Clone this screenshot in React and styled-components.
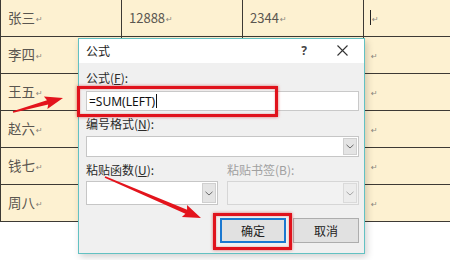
import React from "react";
import styled, { createGlobalStyle } from "styled-components";

const GlobalStyle = createGlobalStyle`
  html, body { margin: 0; padding: 0; background: #ffffff; }
  body { font-family: "Noto Sans", "Noto Sans CJK SC", sans-serif; }
  * { box-sizing: border-box; }
`;

const Page = styled.div`
  position: relative;
  width: 450px;
  height: 260px;
  overflow: hidden;
  background: #ffffff;
`;

const Table = styled.div`
  display: flex;
  flex-direction: column;
  width: 484px;
  background: #fdf1d1;
`;

const Row = styled.div`
  display: grid;
  grid-template-columns: 121px 121px 121px 121px;
  height: 37px;
  border-bottom: 1px solid #3d3a34;
`;

const Cell = styled.div`
  display: flex;
  align-items: center;
  padding-left: ${(p) => p.$pad ?? 7}px;
  border-left: 1px solid #3d3a34;
  font-family: "Noto Sans CJK SC", "Noto Sans", sans-serif;
  font-size: ${(p) => (p.$num ? 13 : 13.5)}px;
  color: #5a5650;
  padding-bottom: 2px;
`;

const Mark = styled.span`
  font-family: "DejaVu Sans", sans-serif;
  font-size: 8px;
  color: #8a867e;
  margin-left: 1px;
  margin-top: 4px;
`;

const Caret = styled.span`
  display: inline-block;
  width: 1px;
  height: 15px;
  background: #222;
`;

const Dialog = styled.div`
  position: absolute;
  left: 78px;
  top: 38px;
  width: 287px;
  height: 216px;
  border: 1px solid #62c1c2;
  background: #f0f0f0;
  display: flex;
  flex-direction: column;
  box-shadow: 2px 3px 7px rgba(0, 0, 0, 0.18);
  font-family: "Noto Sans CJK SC", "Noto Sans", sans-serif;
  font-size: 12px;
  color: #1a1a1a;
`;

const TitleBar = styled.div`
  height: 26px;
  background: #ffffff;
  display: flex;
  align-items: center;
  padding-left: 7px;
  padding-bottom: 2px;
`;

const Title = styled.div`
  flex: 1;
  font-size: 12px;
  color: #222;
`;

const Help = styled.div`
  width: 20px;
  text-align: center;
  font-family: "Noto Sans", sans-serif;
  font-weight: 700;
  font-size: 12px;
  color: #444;
  margin-right: 18px;
`;

const CloseBtn = styled.div`
  width: 20px;
  display: flex;
  justify-content: center;
  margin-right: 12px;
`;

const Body = styled.div`
  flex: 1;
  display: flex;
  flex-direction: column;
  padding: 7px 5px 10px 7px;
`;

const Label = styled.div`
  height: 15px;
  line-height: 15px;
  font-size: 12px;
  color: ${(p) => (p.$disabled ? "#a0a0a0" : "#2a2a2a")};
  margin-top: ${(p) => p.$mt ?? 0}px;
  white-space: nowrap;
`;

const Key = styled.span`
  text-decoration: underline;
  text-underline-offset: 1px;
`;

const TextInput = styled.div`
  margin-top: 6px;
  height: 20px;
  background: #ffffff;
  border: 1px solid #c9c9c9;
  display: flex;
  align-items: center;
  padding-left: 2px;
  font-family: "Noto Sans", sans-serif;
  font-size: 12px;
  color: #111;
`;

const InputCaret = styled.span`
  display: inline-block;
  width: 1px;
  height: 14px;
  background: #111;
  margin-left: 1px;
`;

const Combo = styled.div`
  margin-top: ${(p) => p.$mt ?? 0}px;
  height: ${(p) => p.$h}px;
  background: ${(p) => (p.$disabled ? "#f2f2f2" : "#ffffff")};
  border: 1px solid ${(p) => (p.$disabled ? "#d6d6d6" : "#c6c6c6")};
  display: flex;
  justify-content: flex-end;
  padding: 1px;
`;

const DropBtn = styled.div`
  width: 14px;
  background: ${(p) => (p.$disabled ? "#ececec" : "#e4e4e4")};
  border: 1px solid ${(p) => (p.$disabled ? "#dadada" : "#cfcfcf")};
  display: flex;
  align-items: center;
  justify-content: center;
`;

const PasteRow = styled.div`
  display: grid;
  grid-template-columns: 132px 132px;
  column-gap: 9px;
  margin-top: 5px;
`;

const Col = styled.div`
  display: flex;
  flex-direction: column;
`;

const Buttons = styled.div`
  display: flex;
  justify-content: flex-end;
  gap: 7px;
  margin-top: 13px;
`;

const Button = styled.div`
  width: 66px;
  height: 25px;
  display: flex;
  align-items: center;
  justify-content: center;
  background: #e1e1e1;
  border: ${(p) => (p.$primary ? "2px solid #1b78d0" : "1px solid #adadad")};
  font-size: 12px;
  color: #222;
`;

const Highlight = styled.div`
  position: absolute;
  left: ${(p) => p.$x}px;
  top: ${(p) => p.$y}px;
  width: ${(p) => p.$w}px;
  height: ${(p) => p.$h}px;
  border: 3px solid #e0121c;
  box-shadow: 0 0 3px rgba(200, 0, 0, 0.55), inset 0 0 2px rgba(200, 0, 0, 0.4);
  pointer-events: none;
`;

const Overlay = styled.svg`
  position: absolute;
  left: 0;
  top: 0;
  pointer-events: none;
`;

const Chevron = ({ color = "#6b6b6b" }) => (
  <svg width="8" height="5" viewBox="0 0 8 5">
    <polyline points="0.5,0.8 4,4 7.5,0.8" fill="none" stroke={color} strokeWidth="1" />
  </svg>
);

const CloseIcon = () => (
  <svg width="11" height="11" viewBox="0 0 11 11">
    <path d="M0.5 0.5 L10.5 10.5 M10.5 0.5 L0.5 10.5" stroke="#333" strokeWidth="1.1" />
  </svg>
);

function arrowPoints(tx, ty, hx, hy) {
  const dx = hx - tx;
  const dy = hy - ty;
  const len = Math.hypot(dx, dy);
  const ux = dx / len;
  const uy = dy / len;
  const nx = -uy;
  const ny = ux;
  const headLen = 16;
  const headW = 6.5;
  const bx = hx - ux * headLen;
  const by = hy - uy * headLen;
  const w0 = 0.8;
  const w1 = 2.2;
  const pts = [
    [tx + nx * w0, ty + ny * w0],
    [bx + nx * w1, by + ny * w1],
    [bx + nx * headW - ux * 2, by + ny * headW - uy * 2],
    [hx, hy],
    [bx - nx * headW - ux * 2, by - ny * headW - uy * 2],
    [bx - nx * w1, by - ny * w1],
    [tx - nx * w0, ty - ny * w0],
  ];
  return pts.map((p) => p.map((v) => v.toFixed(1)).join(",")).join(" ");
}

const names = ["张三", "李四", "王五", "赵六", "钱七", "周八"];

export default function App() {
  return (
    <>
      <GlobalStyle />
      <Page>
        <Table>
          {names.map((n, i) => (
            <Row key={n}>
              <Cell>
                {n}
                <Mark>↵</Mark>
              </Cell>
              <Cell $num>
                {i === 0 ? "12888" : ""}
                {i === 0 && <Mark>↵</Mark>}
              </Cell>
              <Cell $num>
                {i === 0 ? "2344" : ""}
                {i === 0 && <Mark>↵</Mark>}
              </Cell>
              <Cell $pad={6}>
                {i === 0 && <Caret />}
                <Mark>↵</Mark>
              </Cell>
            </Row>
          ))}
        </Table>

        <Dialog>
          <TitleBar>
            <Title>公式</Title>
            <Help>?</Help>
            <CloseBtn>
              <CloseIcon />
            </CloseBtn>
          </TitleBar>
          <Body>
            <Label>
              公式(<Key>F</Key>):
            </Label>
            <TextInput>
              =SUM(LEFT)
              <InputCaret />
            </TextInput>
            <Label $mt={5}>
              编号格式(<Key>N</Key>):
            </Label>
            <Combo $mt={5} $h={21}>
              <DropBtn>
                <Chevron />
              </DropBtn>
            </Combo>
            <PasteRow>
              <Col>
                <Label>
                  粘贴函数(<Key>U</Key>):
                </Label>
                <Combo $mt={4} $h={24}>
                  <DropBtn>
                    <Chevron />
                  </DropBtn>
                </Combo>
              </Col>
              <Col>
                <Label $disabled>
                  粘贴书签(B):
                </Label>
                <Combo $mt={4} $h={24} $disabled>
                  <DropBtn $disabled>
                    <Chevron color="#a5a5a5" />
                  </DropBtn>
                </Combo>
              </Col>
            </PasteRow>
            <Buttons>
              <Button $primary>确定</Button>
              <Button>取消</Button>
            </Buttons>
          </Body>
        </Dialog>

        <Highlight $x={77} $y={86} $w={201} $h={31} />
        <Highlight $x={213} $y={213} $w={79} $h={37} />

        <Overlay width="450" height="260" viewBox="0 0 450 260">
          <polygon points={arrowPoints(13, 112, 63, 98)} fill="#e3141c" />
          <polygon points={arrowPoints(105, 177, 201, 218)} fill="#e3141c" />
        </Overlay>
      </Page>
    </>
  );
}
